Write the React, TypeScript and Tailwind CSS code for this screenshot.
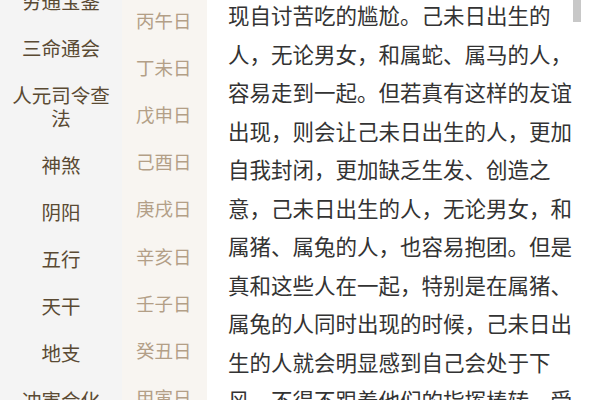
import React from "react";

const left: string[][] = [
  ["穷通宝鉴"],
  ["三命通会"],
  ["人元司令查", "法"],
  ["神煞"],
  ["阴阳"],
  ["五行"],
  ["天干"],
  ["地支"],
  ["冲害合化"],
];

const days = ["丙午日", "丁未日", "戊申日", "己酉日", "庚戌日", "辛亥日", "壬子日", "癸丑日", "甲寅日"];

const lines = [
  "现自讨苦吃的尴尬。己未日出生的",
  "人，无论男女，和属蛇、属马的人，",
  "容易走到一起。但若真有这样的友谊",
  "出现，则会让己未日出生的人，更加",
  "自我封闭，更加缺乏生发、创造之",
  "意，己未日出生的人，无论男女，和",
  "属猪、属兔的人，也容易抱团。但是",
  "真和这些人在一起，特别是在属猪、",
  "属兔的人同时出现的时候，己未日出",
  "生的人就会明显感到自己会处于下",
  "风，不得不跟着他们的指挥棒转，受",
];

export default function App() {
  return (
    <div
      className="w-[600px] h-[400px] overflow-hidden flex bg-white relative"
      style={{ fontFamily: '"Noto Sans CJK SC", "Noto Sans", sans-serif' }}
    >
      <div className="w-[122px] shrink-0 bg-[#f4f4f4] flex flex-col">
        <div className="-mt-[23.5px] flex flex-col">
          {left.map((it, i) => (
            <div
              key={i}
              className={`${it.length > 1 ? "h-[70px]" : "h-[47px]"} shrink-0 flex flex-col items-center justify-center text-[19.5px] leading-[23px] text-[#5a4a33]`}
            >
              {it.map((t, j) => (
                <span key={j} className="whitespace-nowrap">{t}</span>
              ))}
            </div>
          ))}
        </div>
      </div>
      <div className="w-[85px] shrink-0 bg-[#f8f5f1] flex flex-col">
        <div className="-mt-[3px] flex flex-col">
          {days.map((d, i) => (
            <div
              key={i}
              className="h-[47.2px] shrink-0 flex items-center pl-[14px] text-[18.5px] text-[#b39f87] whitespace-nowrap"
            >
              {d}
            </div>
          ))}
        </div>
      </div>
      <div className="flex-1 pl-[21px] text-[21.5px] leading-[38.5px] text-[#333333]">
        <div className="-mt-[4px]">
          {lines.map((l, i) => (
            <div key={i} className="whitespace-nowrap">{l}</div>
          ))}
        </div>
      </div>
      <div className="absolute left-[573px] top-0 w-[8px] h-[22px] bg-[#c8c8c8]" />
    </div>
  );
}
